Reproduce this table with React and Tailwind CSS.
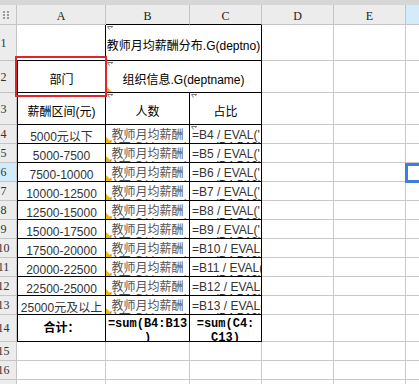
import React from "react";

const sans = "font-['Liberation_Sans','Noto_Sans_CJK_SC',sans-serif]";
const serif = "font-['Liberation_Serif',serif]";
const mono = "font-['Liberation_Mono',monospace]";

// plain sheet gridline vs. the report's black cell border
const grid = "border-r border-b border-[#c9c9c9]";
const ink = "border-r border-b border-black";

const ranges = [
  "5000元以下",
  "5000-7500",
  "7500-10000",
  "10000-12500",
  "12500-15000",
  "15000-17500",
  "17500-20000",
  "20000-22500",
  "22500-25000",
  "25000元及以上",
];

// little expand arrow in the corner of a bound cell
function Marker() {
  return (
    <svg className="absolute left-[1px] top-[1px]" width="7" height="5" viewBox="0 0 7 5">
      <path d="M0.5 0.5H5.5M4 -0.5L6 0.5L4 1.5M0.5 0.5L2.5 3.5" stroke="#7a7a7a" strokeWidth="1" fill="none" />
    </svg>
  );
}

// comment flag at bottom-left
function Flag() {
  return (
    <svg className="absolute bottom-0 left-0" width="6" height="6" viewBox="0 0 6 6">
      <polygon points="0,0 0,6 6,6" fill="#f2b705" />
    </svg>
  );
}

function Grip() {
  return (
    <svg width="6" height="8" viewBox="0 0 6 8">
      {[0, 3, 6].map((y) => (
        <g key={y} fill="#9a9a9a">
          <rect x="0" y={y} width="2" height="2" />
          <rect x="4" y={y} width="2" height="2" />
        </g>
      ))}
    </svg>
  );
}

function ColHead({ label, dark }) {
  return (
    <div
      className={`flex items-center justify-center border-r border-b border-[#c4c4c4] bg-[#ececec] pt-[2px] text-[12px] text-[#222] ${serif} ${
        dark ? "border-b-black" : ""
      }`}
    >
      {label}
    </div>
  );
}

function RowHead({ n, active }) {
  return (
    <div
      className={`flex items-center justify-center overflow-hidden border-r border-b border-[#c4c4c4] pr-[9px] text-[12px] text-[#333] ${serif} ${
        active ? "bg-[#d4ecfa]" : "bg-[#ececec]"
      }`}
    >
      {n}
    </div>
  );
}

function Blank() {
  return (
    <>
      <div className={grid} />
      <div className={grid} />
      <div className="border-b border-[#c9c9c9]" />
    </>
  );
}

export default function App() {
  return (
    <div className={`relative h-[384px] w-[419px] overflow-hidden bg-white ${sans}`}>
      <div className="h-[5px] bg-[#d6d6d6]" />
      <div className="grid grid-cols-[17px_89px_84px_72px_72px_72px_1fr] grid-rows-[20px_36px_32px_32px_repeat(10,19px)_27px_19px_19px_19px]">
        {/* column letters */}
        <div className="flex items-center border-r border-b border-[#c4c4c4] bg-[#ececec] pl-[3px]">
          <Grip />
        </div>
        <ColHead label="A" />
        <ColHead label="B" dark />
        <ColHead label="C" dark />
        <ColHead label="D" />
        <ColHead label="E" />
        <div className="border-b border-[#c4c4c4] bg-[#d4ecfa]" />

        {/* row 1 */}
        <RowHead n={1} />
        <div className={ink} />
        <div className={`relative col-span-2 flex justify-center whitespace-nowrap pt-[14px] text-[12px] leading-[14px] text-black ${ink}`}>
          <Marker />
          教师月均薪酬分布.G(deptno)
        </div>
        <Blank />

        {/* row 2 */}
        <RowHead n={2} />
        <div className={`flex justify-center border-l pt-[12px] text-[12px] leading-[14px] text-black ${ink}`}>部门</div>
        <div className={`relative col-span-2 flex justify-center whitespace-nowrap pt-[12px] text-[12px] leading-[14px] text-black ${ink}`}>
          <Marker />
          组织信息.G(deptname)
          <Flag />
        </div>
        <Blank />

        {/* row 3 */}
        <RowHead n={3} />
        <div className={`flex justify-center border-l pt-[12px] text-[12px] leading-[14px] text-black ${ink}`}>薪酬区间(元)</div>
        <div className={`relative flex justify-center pt-[12px] text-[12px] leading-[14px] text-black ${ink}`}>
          <Marker />
          人数
        </div>
        <div className={`relative flex justify-center pt-[12px] text-[12px] leading-[14px] text-black ${ink}`}>
          <Marker />
          占比
        </div>
        <Blank />

        {/* rows 4-13 */}
        {ranges.map((r, i) => {
          const n = i + 4;
          return (
            <React.Fragment key={n}>
              <RowHead n={n} active={n === 6} />
              <div className={`flex justify-center overflow-hidden whitespace-nowrap border-l pt-[5px] text-[12px] leading-[14px] text-[#333] ${ink}`}>
                {r}
              </div>
              <div className={`relative overflow-hidden pt-[4px] text-center text-[12px] leading-[12px] text-[#555] ${ink}`}>
                <div className="whitespace-nowrap">教师月均薪酬</div>
                <div className="whitespace-nowrap">分布.G(deptno)</div>
                <Flag />
              </div>
              <div className={`relative overflow-hidden pl-[2px] pt-[4px] text-[12px] leading-[12px] text-[#333] ${ink}`}>
                {n === 4 && <Marker />}
                <div className="whitespace-nowrap">=B{n} / EVAL('</div>
                <div className="whitespace-nowrap">sum(B4:B13)')</div>
              </div>
              <Blank />
            </React.Fragment>
          );
        })}

        {/* row 14: totals */}
        <RowHead n={14} />
        <div className={`flex items-center justify-center border-l text-[12px] font-bold text-black ${ink}`}>合计：</div>
        <div className={`overflow-hidden pt-[2px] text-center text-[12px] font-bold leading-[14px] text-black ${mono} ${ink}`}>
          <div>=sum(B4:B13</div>
          <div>)</div>
        </div>
        <div className={`overflow-hidden pt-[2px] text-center text-[12px] font-bold leading-[14px] text-black ${mono} ${ink}`}>
          <div>=sum(C4:</div>
          <div>C13)</div>
        </div>
        <Blank />

        {/* empty rows */}
        {[15, 16, 17].map((n) => (
          <React.Fragment key={n}>
            <RowHead n={n} />
            <div className={grid} />
            <div className={grid} />
            <div className={grid} />
            <Blank />
          </React.Fragment>
        ))}
      </div>

      {/* red highlight around 部门 */}
      <div className="absolute left-[15px] top-[56px] h-[41px] w-[92px] border-2 border-[#e2232a]" />
      {/* active cell F6 */}
      <div className="absolute left-[405px] top-[163px] h-[20px] w-[30px] border-[3px] border-[#3d7edb]" />
    </div>
  );
}
